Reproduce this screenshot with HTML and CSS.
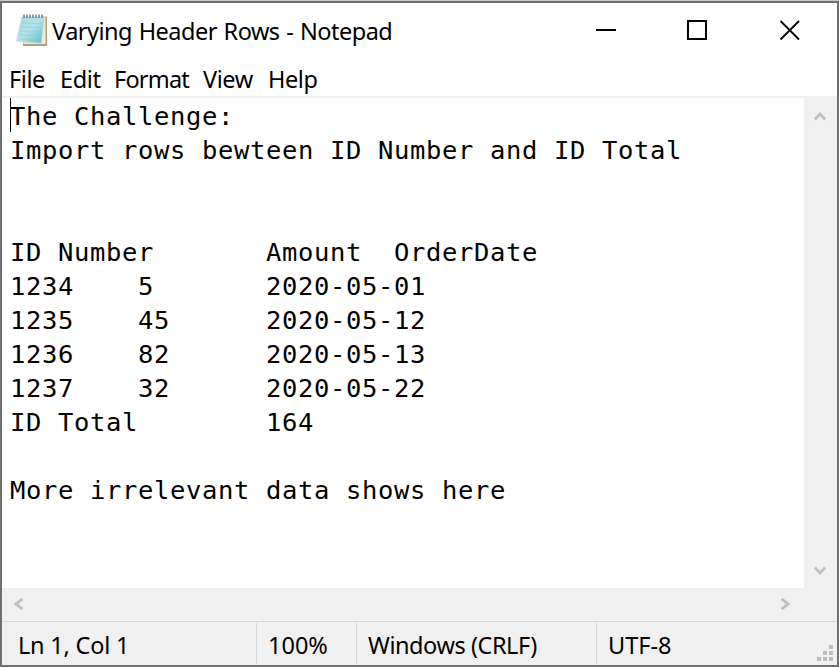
FILE: index.html
```html
<!DOCTYPE html>
<html lang="en">
<head>
<meta charset="utf-8">
<title>Varying Header Rows - Notepad</title>
<link rel="stylesheet" href="styles.css">
</head>
<body>
<div class="window">
  <header class="titlebar">
    <svg class="app-icon" width="34" height="34" viewBox="0 0 34 34">
      <defs>
        <linearGradient id="page" x1="0" y1="0" x2="1" y2="1">
          <stop offset="0" stop-color="#a5dbe5"/><stop offset=".5" stop-color="#b5e2eb"/><stop offset="1" stop-color="#5cb6ca"/>
        </linearGradient>
      </defs>
      <path d="M27 3.500h5v29.500h-24v-3z" fill="#b39f76"/>
      <path d="M26 3.500h4.500v27.500h-22v-3z" fill="#eee9dc"/>
      <path d="M7 4h22l-3 26-24.500-2z" fill="url(#page)" stroke="#9bd0db" stroke-width=".6"/>
      <path d="M7 10l20 .5M6.500 14l20 .5M5.800 18l20 .5M5 22l20 .5M4.300 26l20 .5" stroke="#8dcad6" stroke-width=".6"/>
      <path d="M9 1.500v3.500M12 1.500v3.500M15 1.500v3.500M18 1.500v3.500M21 1.500v3.500M24 1.500v3.500M27 1.500v3.500" stroke="#6f8084" stroke-width="1.500"/>
    </svg>
    <h1 class="title">Varying Header Rows - Notepad</h1>
    <svg class="controls" width="206" height="22" viewBox="0 0 206 22" fill="none" stroke="#000" stroke-width="2">
      <path d="M1 11h20"/>
      <rect x="93" y="2" width="18" height="18"/>
      <path d="M185.500 2l18.500 18.500M204 2l-18.500 18.500" stroke-width="1.800"/>
    </svg>
  </header>
  <nav class="menu">
    <span class="file">File</span><span class="edit">Edit</span><span class="format">Format</span><span class="view">View</span><span class="help">Help</span>
  </nav>
  <main class="editor">
    <pre class="text"><i class="caret"></i>The Challenge:
Import rows bewteen ID Number and ID Total


ID Number	Amount	OrderDate
1234	5	2020-05-01
1235	45	2020-05-12
1236	82	2020-05-13
1237	32	2020-05-22
ID Total	164

More irrelevant data shows here</pre>
    <div class="vscroll">
      <svg width="12" height="10" viewBox="0 0 12 10"><path d="M.8 8.500L6 3l5.200 5.500"/></svg>
      <svg width="12" height="10" viewBox="0 0 12 10"><path d="M.8 1.500L6 7l5.200-5.500"/></svg>
    </div>
  </main>
  <div class="hscroll">
    <svg width="10" height="12" viewBox="0 0 10 12"><path d="M8.500.8L2 6l6.500 5.200"/></svg>
    <svg width="10" height="12" viewBox="0 0 10 12"><path d="M1.500.8L8 6l-6.500 5.200"/></svg>
  </div>
  <footer class="status">
    <span class="pos">Ln 1, Col 1</span><span class="zoom">100%</span><span class="eol">Windows (CRLF)</span><span class="enc">UTF-8</span>
    <svg class="grip" width="16" height="16" viewBox="0 0 16 16" fill="#bfbfbf"><path d="M12 0h4v4h-4zM6 6h4v4H6zM12 6h4v4h-4zM0 12h4v4H0zM6 12h4v4H6zM12 12h4v4h-4z"/></svg>
  </footer>
</div>
</body>
</html>
```
FILE: styles.css
```css
* { box-sizing: border-box; }
body { margin: 0; overflow: hidden; background: #c9c9c9; }
.window {
  height: 666px;
  margin-top: 1px;
  border: 2px solid #707070;
  background: #fff;
  color: #000;
  font: 23.5px/32px "Noto Sans", "Open Sans", sans-serif;
  display: flex;
  flex-direction: column;
}
.titlebar { height: 60px; display: flex; align-items: flex-start; padding: 10px 36px 0 13px; }
.app-icon { flex: none; }
.title { margin: 2px 0 0 3px; font-size: inherit; font-weight: 400; letter-spacing: -0.5px; word-spacing: 1px; white-space: nowrap; }
.controls { margin: 6px 0 0 auto; flex: none; }
.menu { height: 35px; display: flex; padding-left: 7px; border-bottom: 2px solid #f0f0f0; letter-spacing: -0.4px; white-space: nowrap; }
.file { width: 51px; }
.edit { width: 54px; }
.format { width: 89px; letter-spacing: -0.8px; }
.view { width: 65px; }
.editor { height: 490px; display: flex; }
.text {
  flex: 1;
  margin: 0;
  padding: 1px 0 0 8px;
  font: 25.5px/34px "DejaVu Sans Mono", monospace;
  letter-spacing: 0.65px;
  tab-size: 8;
}
.caret { display: inline-block; width: 1px; height: 34px; margin: -1px -1px 0 0; background: #000; vertical-align: top; }
.vscroll { width: 33px; background: #f0f0f0; display: flex; flex-direction: column; justify-content: space-between; align-items: flex-start; padding: 13px 0 12px 10px; }
.vscroll svg, .hscroll svg { fill: none; stroke: #bfbfbf; stroke-width: 2.8; }
.hscroll { height: 33px; background: #f0f0f0; display: flex; align-items: flex-start; justify-content: space-between; padding: 10px 47px 0 12px; }
.status { flex: 1; display: flex; background: #f0f0f0; border-top: 1px solid #d7d7d7; padding: 1px 4px 1px 0; white-space: nowrap; line-height: 44px; }
.status span { height: 41px; padding-left: 11px; border-right: 1px solid #d7d7d7; }
.status .pos { width: 255px; padding-left: 16px; letter-spacing: -0.2px; }
.zoom { width: 100px; }
.eol { width: 240px; letter-spacing: -0.45px; }
.status .enc { border: 0; }
.grip { margin: auto 0 3px auto; }
```
